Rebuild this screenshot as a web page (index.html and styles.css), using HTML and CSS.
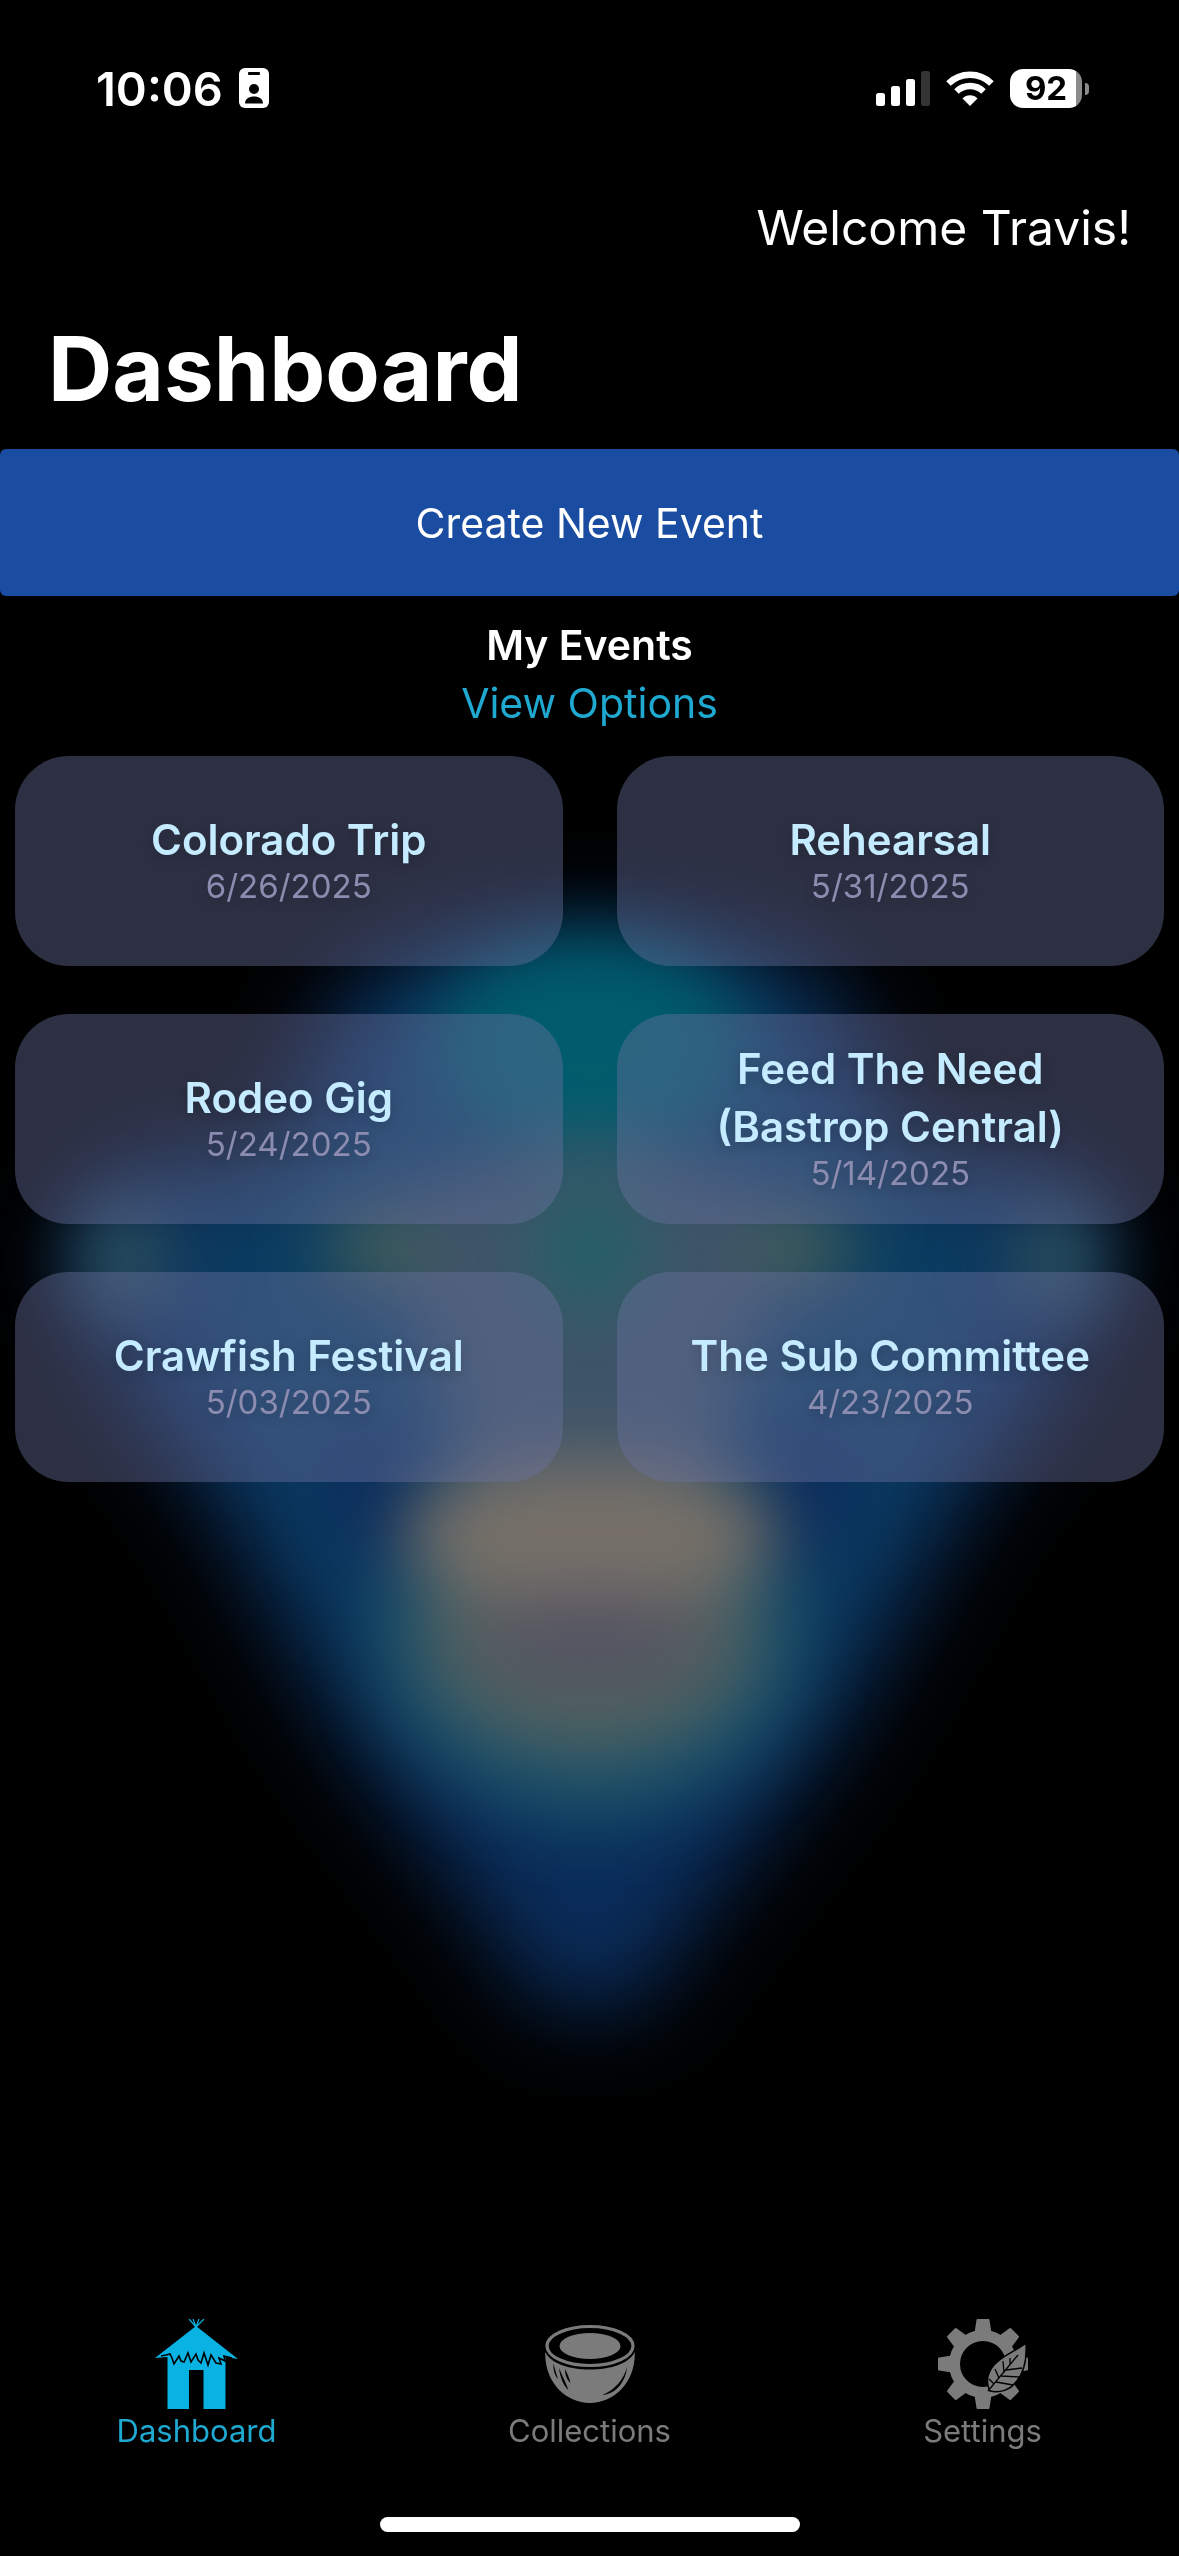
FILE: index.html
```html
<!DOCTYPE html>
<html lang="en">
<head>
  <meta charset="UTF-8">
  <meta name="viewport" content="width=device-width, initial-scale=1.0">
  <title>Dashboard</title>
  <link rel="stylesheet" href="styles.css">
</head>
<body>
  <!-- blurred artwork behind the page -->
  <svg class="backdrop" viewBox="0 0 1179 2556" preserveAspectRatio="xMidYMin slice" aria-hidden="true">
    <defs>
      <filter id="soft" x="-50%" y="-50%" width="200%" height="200%" color-interpolation-filters="sRGB"><feGaussianBlur stdDeviation="46"/></filter>
      <filter id="mid" x="-80%" y="-80%" width="260%" height="260%" color-interpolation-filters="sRGB"><feGaussianBlur stdDeviation="34"/></filter>
    </defs>
    <g filter="url(#soft)">
      <path fill="#0a2c5a" d="M590 925C690 925 800 940 850 1010L900 1150C970 1170 1070 1130 1110 1240C1100 1330 1040 1410 965 1510L860 1700C800 1800 720 1880 640 2010H540C460 1880 380 1800 320 1700L215 1510C140 1410 80 1330 70 1240C110 1130 210 1170 280 1150L330 1010C380 940 490 925 590 925Z"/>
      <path fill="#0c4a66" d="M400 980H780L820 1130L1020 1220L930 1480L790 1720L590 1840L390 1720L250 1480L160 1220L360 1130Z" opacity="0.6"/>
    </g>
    <g filter="url(#mid)">
      <ellipse cx="590" cy="1045" rx="150" ry="105" fill="#005c6c"/>
      <ellipse cx="590" cy="1640" rx="210" ry="175" fill="#22566a" opacity="0.8"/>
      <path fill="#4b5a6a" d="M360 1210L590 1130L820 1210L750 1360L710 1500H470L430 1360Z" opacity="0.8"/>
      <path fill="#0b2c5c" d="M310 1430H410V1560H340ZM870 1430H770V1560H840Z"/>
      <ellipse cx="590" cy="1635" rx="165" ry="115" fill="#54625f"/>
      <ellipse cx="590" cy="1250" rx="60" ry="64" fill="#266066"/>
      <ellipse cx="378" cy="1250" rx="56" ry="34" fill="#466058"/>
      <ellipse cx="802" cy="1250" rx="56" ry="34" fill="#466058"/>
      <ellipse cx="125" cy="1260" rx="48" ry="56" fill="#2c5260"/>
      <ellipse cx="1055" cy="1260" rx="48" ry="56" fill="#2c5260"/>
      <ellipse cx="590" cy="1532" rx="190" ry="74" fill="#767068"/>
      <ellipse cx="590" cy="1638" rx="115" ry="42" fill="#525262"/>
    </g>
  </svg>

  <div class="screen">
    <div class="status-bar">
      <div class="status-left">
        <span class="time">10:06</span>
        <svg class="id-icon" viewBox="0 0 30 40" aria-hidden="true">
          <rect width="30" height="40" rx="6" fill="#fff"/>
          <rect x="9" y="4" width="12" height="3" rx="1"/>
          <circle cx="15" cy="21" r="5"/>
          <path d="M6 35.500C6 31 10 28.500 15 28.500S24 31 24 35.500Z"/>
        </svg>
      </div>
      <div class="status-right">
        <svg class="signal" viewBox="0 0 54 35" aria-hidden="true">
          <rect y="22" width="9" height="13" rx="2.500" fill="#fff"/>
          <rect x="15" y="15" width="9" height="20" rx="2.500" fill="#fff"/>
          <rect x="30" y="8" width="9" height="27" rx="2.500" fill="#fff"/>
          <rect x="45" width="9" height="35" rx="2.500" fill="#343434"/>
        </svg>
        <svg class="wifi" viewBox="0 0 48 35" aria-hidden="true">
          <g fill="none" stroke="#fff" stroke-width="6.500">
            <path d="M2.500 12.500A31 31 0 0 1 45.500 12.500"/>
            <path d="M10.500 20.500A19.500 19.500 0 0 1 37.500 20.500"/>
          </g>
          <path fill="#fff" d="M24 35L16.500 27.500A10.500 10.500 0 0 1 31.500 27.500Z"/>
        </svg>
        <div class="battery"><span class="battery-level">92</span></div>
      </div>
    </div>

    <header class="header">
      <p class="welcome">Welcome Travis!</p>
      <h1>Dashboard</h1>
    </header>

    <main>
      <button type="button" class="create-btn">Create New Event</button>

      <div class="events-head">
        <h2>My Events</h2>
        <button type="button" class="view-options">View Options</button>
      </div>

      <div class="events">
        <a class="card" href="#colorado-trip">
          <span class="card-title">Colorado Trip</span>
          <span class="card-date">6/26/2025</span>
        </a>
        <a class="card" href="#rehearsal">
          <span class="card-title">Rehearsal</span>
          <span class="card-date">5/31/2025</span>
        </a>
        <a class="card" href="#rodeo-gig">
          <span class="card-title">Rodeo Gig</span>
          <span class="card-date">5/24/2025</span>
        </a>
        <a class="card" href="#feed-the-need">
          <span class="card-title">Feed The Need (Bastrop Central)</span>
          <span class="card-date">5/14/2025</span>
        </a>
        <a class="card" href="#crawfish-festival">
          <span class="card-title">Crawfish Festival</span>
          <span class="card-date">5/03/2025</span>
        </a>
        <a class="card" href="#sub-committee">
          <span class="card-title">The Sub Committee</span>
          <span class="card-date">4/23/2025</span>
        </a>
      </div>
    </main>

    <nav class="tabs">
      <a class="tab active" href="#dashboard">
        <!-- tiki hut -->
        <svg viewBox="0 0 90 90" aria-hidden="true">
          <path fill="currentColor" d="M44 7L86 40L73.500 38V90H51.500V51H37V90H15.500V38L3 39Z"/>
          <path fill="none" stroke="currentColor" stroke-width="1.200" d="M44 8L37 0M44 8L41 0M44 8L47 0M44 8L52 0"/>
          <path fill="none" stroke="#000" stroke-width="1.600" d="M9 37L14 36L18 35L20 39L22 45L27 37L29 42L32 43L36 34L39 43L44 35L46 41L49 44L52 34L56 46L59 36L64 44L69 45L67 39L73 42L72 37L80 39"/>
        </svg>
        <span>Dashboard</span>
      </a>
      <a class="tab" href="#collections">
        <!-- coconut half -->
        <svg viewBox="0 0 90 90" aria-hidden="true">
          <ellipse cx="45" cy="27" rx="43" ry="19.500" fill="none" stroke="currentColor" stroke-width="3.200"/>
          <ellipse cx="45" cy="27" rx="30.500" ry="13" fill="currentColor"/>
          <path fill="currentColor" d="M0.300 33C6 45 25 50.500 45 50.500S84 45 89.700 33C91 62 70 84 45 84S-1 62 0.300 33Z"/>
          <g fill="#000">
            <path d="M8.500 45C8 51 10 57 13 60C11 54 10 50 8.500 45Z"/>
            <path d="M14 49C15 58 18 66 23.500 71C20 62 17 56 14 49Z"/>
            <path d="M20 50C20 56 22 61 25.500 64C24 58 22 54 20 50Z"/>
            <path d="M82 48C79 60 70 71 57.500 76C71 75 81 62 82 48Z"/>
          </g>
        </svg>
        <span>Collections</span>
      </a>
      <a class="tab" href="#settings">
        <!-- gear with feather -->
        <svg viewBox="0 0 90 90" aria-hidden="true">
          <defs><path id="tooth" d="M36.500 14L38.500 1Q38.500 0 39.500 0H50.500Q51.500 0 51.500 1L53.500 14Z"/></defs>
          <g fill="currentColor">
            <use href="#tooth"/>
            <use href="#tooth" transform="rotate(45 45 45)"/>
            <use href="#tooth" transform="rotate(90 45 45)"/>
            <use href="#tooth" transform="rotate(135 45 45)"/>
            <use href="#tooth" transform="rotate(180 45 45)"/>
            <use href="#tooth" transform="rotate(225 45 45)"/>
            <use href="#tooth" transform="rotate(270 45 45)"/>
            <use href="#tooth" transform="rotate(315 45 45)"/>
          </g>
          <circle cx="45" cy="45" r="28.500" fill="none" stroke="currentColor" stroke-width="11"/>
          <path fill="currentColor" stroke="#000" stroke-width="1.500" d="M88 24C80 31 65 36 56 46C50 53 48 62 51 70L52 72C62 74 72 71 77 64C85 56 89 42 88 24Z"/>
          <path fill="none" stroke="#000" stroke-width="1.300" d="M50 72L80 36M66 54L65 42M61 59L57 50M56 65L51 60M68 51L84 49M63 57L82 58M58 63L75 66M72 46L72 39"/>
        </svg>
        <span>Settings</span>
      </a>
    </nav>
    <div class="home-indicator"></div>
  </div>
</body>
</html>
```
FILE: styles.css
```css
:root {
  --blue: #1a4da1;
  --cyan: #1fa8d0;
  --cyan-bright: #08b2e3;
  --gray: #7b7b7b;
  --card: rgba(107, 114, 160, 0.42);
}
* {
  box-sizing: border-box;
}
body {
  margin: 0;
  background: #000;
  color: #fff;
  font-family: Inter, "Liberation Sans", sans-serif;
}
h1, h2, p {
  margin: 0;
}
button {
  font-family: inherit;
  border: none;
  padding: 0;
  cursor: pointer;
}
a {
  text-decoration: none;
}

.backdrop {
  position: absolute;
  top: 0;
  left: 0;
  width: 100%;
  z-index: -1;
}
.screen {
  min-height: 100vh;
  display: flex;
  flex-direction: column;
}

/* status bar */
.status-bar {
  display: flex;
  justify-content: space-between;
  align-items: center;
  height: 176px;
  padding: 0 90px 0 96px;
}
.status-left,
.status-right {
  display: flex;
  align-items: center;
  gap: 16px;
}
.time {
  font-size: 47px;
  font-weight: 600;
}
.id-icon {
  width: 30px;
  height: 40px;
}
.signal {
  width: 54px;
  height: 35px;
}
.wifi {
  width: 48px;
  height: 35px;
}
.battery {
  position: relative;
  width: 72px;
  height: 39px;
  border-radius: 13px;
  background: linear-gradient(90deg, #fff 92%, #8b8b8b 92%);
  color: #000;
  text-align: center;
  margin-right: 7px;
}
.battery::after {
  content: "";
  position: absolute;
  left: 75px;
  top: 14px;
  width: 4px;
  height: 12px;
  border-radius: 0 6px 6px 0;
  background: #8b8b8b;
}
.battery-level {
  font-size: 33px;
  line-height: 39px;
  font-weight: 700;
}

/* header */
.header {
  padding: 22px 48px 25px;
}
.welcome {
  font-size: 48px;
  line-height: 60px;
  text-align: right;
}
h1 {
  font-size: 89px;
  line-height: 110px;
  font-weight: 700;
  margin-top: 56px;
}

/* events */
.create-btn {
  display: block;
  width: 100%;
  height: 147px;
  border-radius: 6px;
  background: var(--blue);
  color: #fff;
  font-size: 41px;
}
.events-head {
  display: flex;
  flex-direction: column;
  align-items: center;
  padding: 20px 0 24px;
}
h2,
.view-options {
  font-size: 41px;
  line-height: 58px;
}
h2 {
  font-weight: 600;
}
.view-options {
  background: none;
  color: var(--cyan);
}
.events {
  display: grid;
  grid-template-columns: 1fr 1fr;
  gap: 48px 54px;
  padding: 0 15px;
}
.card {
  display: flex;
  flex-direction: column;
  align-items: center;
  justify-content: center;
  min-height: 210px;
  padding: 0 60px 8px;
  border-radius: 54px;
  background: var(--card);
  text-align: center;
  text-shadow: 0 4px 12px rgba(0, 0, 0, 0.2);
}
.card-title {
  color: #c4ebff;
  font-size: 42px;
  line-height: 58px;
  font-weight: 600;
}
.card-date {
  color: #8c8bb0;
  font-size: 33px;
  line-height: 34px;
}

/* tab bar */
.tabs {
  display: flex;
  margin-top: auto;
}
.tab {
  flex: 1;
  display: flex;
  flex-direction: column;
  align-items: center;
  gap: 4px;
  color: var(--gray);
  font-size: 31px;
  line-height: 36px;
}
.tab svg {
  width: 90px;
  height: 90px;
}
.tab.active {
  color: var(--cyan);
}
.tab.active svg {
  color: var(--cyan-bright);
}
.home-indicator {
  width: 36%;
  max-width: 420px;
  height: 15px;
  margin: 68px auto 24px;
  border-radius: 8px;
  background: #fff;
}
```
